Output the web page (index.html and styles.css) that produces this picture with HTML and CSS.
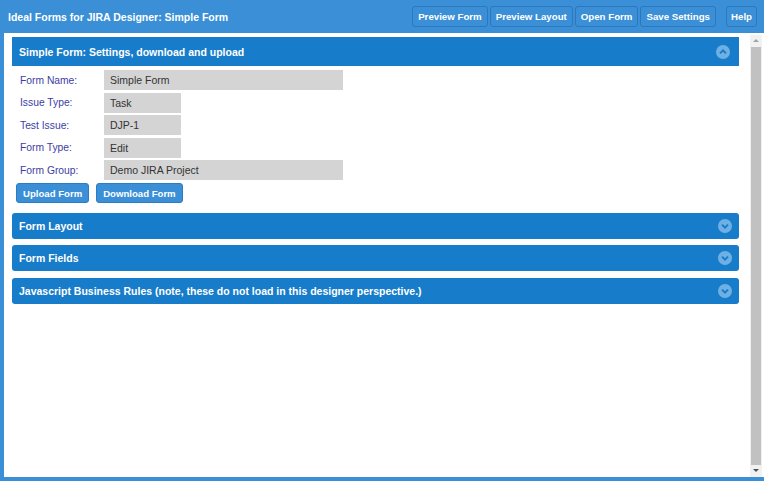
FILE: index.html
```html
<!DOCTYPE html>
<html>
    <head>
        <title>Ideal Forms for JIRA Designer</title>
        <link rel="stylesheet" href="styles.css">
    </head>
    <body>
        <div class="top_bar">
            <span class="app_title">Ideal Forms for JIRA Designer: Simple Form</span>
            <div class="top_buttons">
                <button class="top_btn">Preview Form</button>
                <button class="top_btn">Preview Layout</button>
                <button class="top_btn">Open Form</button>
                <button class="top_btn">Save Settings</button>
                <button class="top_btn help_btn">Help</button>
            </div>
        </div>
        <div class="main">
            <div class="content">
                <div class="section open">
                    <div class="section_head">
                        <span>Simple Form: Settings, download and upload</span>
                        <svg class="chev" width="14" height="14" viewBox="0 0 14 14"><circle cx="7" cy="7" r="7" fill="#6fb0e4"/><path d="M4 8.4 L7 5.4 L10 8.4" fill="none" stroke="#1a7ac8" stroke-width="2"/></svg>
                    </div>
                    <div class="section_body">
                        <div class="row"><label>Form Name:</label><div class="field wide">Simple Form</div></div>
                        <div class="row"><label>Issue Type:</label><div class="field">Task</div></div>
                        <div class="row"><label>Test Issue:</label><div class="field">DJP-1</div></div>
                        <div class="row"><label>Form Type:</label><div class="field">Edit</div></div>
                        <div class="row"><label>Form Group:</label><div class="field wide">Demo JIRA Project</div></div>
                        <div class="actions">
                            <button class="form_btn">Upload Form</button>
                            <button class="form_btn">Download Form</button>
                        </div>
                    </div>
                </div>
                <div class="section">
                    <div class="section_head">
                        <span>Form Layout</span>
                        <svg class="chev" width="14" height="14" viewBox="0 0 14 14"><circle cx="7" cy="7" r="7" fill="#6fb0e4"/><path d="M4 5.6 L7 8.6 L10 5.6" fill="none" stroke="#1a7ac8" stroke-width="2"/></svg>
                    </div>
                </div>
                <div class="section">
                    <div class="section_head">
                        <span>Form Fields</span>
                        <svg class="chev" width="14" height="14" viewBox="0 0 14 14"><circle cx="7" cy="7" r="7" fill="#6fb0e4"/><path d="M4 5.6 L7 8.6 L10 5.6" fill="none" stroke="#1a7ac8" stroke-width="2"/></svg>
                    </div>
                </div>
                <div class="section">
                    <div class="section_head">
                        <span>Javascript Business Rules (note, these do not load in this designer perspective.)</span>
                        <svg class="chev" width="14" height="14" viewBox="0 0 14 14"><circle cx="7" cy="7" r="7" fill="#6fb0e4"/><path d="M4 5.6 L7 8.6 L10 5.6" fill="none" stroke="#1a7ac8" stroke-width="2"/></svg>
                    </div>
                </div>
            </div>
            <div class="scrollbar">
                <div class="arrow up"></div>
                <div class="thumb"></div>
                <div class="arrow down"></div>
            </div>
        </div>
    </body>
</html>
```

FILE: styles.css
```css
* {
	box-sizing: border-box;
}
body {
	margin: 0;
	background: #3a8fd6;
	font-family: "Liberation Sans", Arial, sans-serif;
	width: 764px;
	height: 481px;
	overflow: hidden;
}
.top_bar {
	height: 33px;
	display: flex;
	align-items: center;
	justify-content: space-between;
	padding: 0 7px 0 8px;
}
.app_title {
	color: #fff;
	font-weight: bold;
	font-size: 10.5px;
}
.top_buttons {
	display: flex;
	gap: 2px;
}
.top_btn {
	height: 21px;
	background: #3a8fd6;
	border: 1px solid #2b78bd;
	border-radius: 3px;
	color: #fff;
	font-family: inherit;
	font-weight: bold;
	font-size: 9.7px;
	padding: 0 5px;
}
.help_btn {
	margin-left: 8px;
	padding: 0 4px;
}
.main {
	margin-left: 4px;
	height: 444px;
	background: #fff;
	display: flex;
}
.content {
	flex: 1;
	padding: 4px 11px 0 8px;
}
.section {
	margin-bottom: 6.5px;
}
.section_head {
	background: #177cc9;
	color: #fff;
	font-weight: bold;
	font-size: 10.5px;
	height: 26px;
	border-radius: 3px;
	display: flex;
	align-items: center;
	justify-content: space-between;
	padding: 0 7px 0 7px;
}
.open .section_head {
	height: 29px;
	border-radius: 0;
	padding-right: 9px;
}
.section_body {
	padding: 4px 0 3px 4px;
}
.row {
	display: flex;
	align-items: center;
	height: 20px;
	margin-bottom: 2.6px;
}
.row label {
	width: 88px;
	padding-left: 4px;
	color: #3d3da5;
	font-size: 10.3px;
}
.field {
	background: #d4d4d4;
	height: 20px;
	line-height: 20px;
	width: 77px;
	padding-left: 6px;
	font-size: 10.5px;
	color: #333;
}
.field.wide {
	width: 239px;
}
.actions {
	display: flex;
	gap: 7px;
	margin-top: 3px;
}
.form_btn {
	height: 20px;
	background: #3a8fd6;
	border: 1px solid #2b7cc0;
	border-radius: 3px;
	color: #fff;
	font-family: inherit;
	font-weight: bold;
	font-size: 9.6px;
	padding: 0 6px;
}
.scrollbar {
	width: 12px;
	margin-right: 2px;
	margin-top: 2px;
	background: #f1f1f1;
	display: flex;
	flex-direction: column;
}
.thumb {
	flex: 1;
	background: #c1c1c1;
	margin: 0 1px;
}
.arrow {
	height: 12px;
	position: relative;
}
.arrow::after {
	content: "";
	position: absolute;
	left: 3px;
	top: 4px;
	border-left: 3px solid transparent;
	border-right: 3px solid transparent;
}
.arrow.up::after {
	border-bottom: 3px solid #a3a3a3;
}
.arrow.down::after {
	border-top: 3px solid #505050;
}
```
